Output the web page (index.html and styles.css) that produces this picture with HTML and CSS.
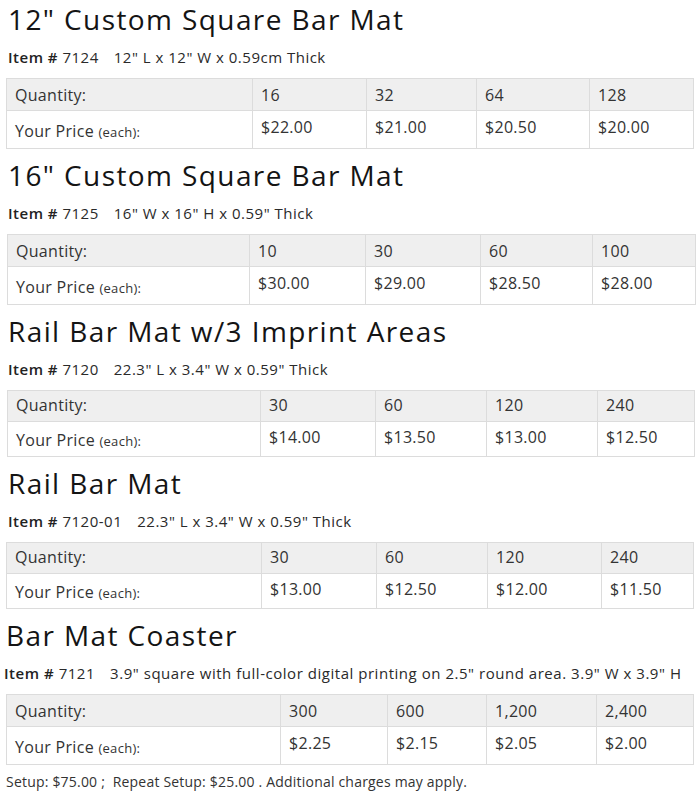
FILE: index.html
```html
<!DOCTYPE html>
<html lang="en">
<head>
<meta charset="utf-8">
<title>Bar Mat Pricing</title>
<link rel="stylesheet" href="styles.css">
</head>
<body>
<main class="page">
  <section class="product">
    <h2 class="product-title">12" Custom Square Bar Mat</h2>
    <p class="item-line"><span class="item-label">Item #</span> 7124<span class="item-desc">12" L x 12" W x 0.59cm Thick</span></p>
    <table class="price-table t1">
      <colgroup><col class="c1"><col class="c2"><col class="c3"><col class="c4"><col class="c5"></colgroup>
      <tr class="qty-row"><th class="label-cell">Quantity:</th><td>16</td><td>32</td><td>64</td><td>128</td></tr>
      <tr class="price-row"><th class="label-cell">Your Price <span class="each">(each):</span></th><td>$22.00</td><td>$21.00</td><td>$20.50</td><td>$20.00</td></tr>
    </table>
  </section>

  <section class="product">
    <h2 class="product-title">16" Custom Square Bar Mat</h2>
    <p class="item-line"><span class="item-label">Item #</span> 7125<span class="item-desc">16" W x 16" H x 0.59" Thick</span></p>
    <table class="price-table t2">
      <colgroup><col class="c1"><col class="c2"><col class="c3"><col class="c4"><col class="c5"></colgroup>
      <tr class="qty-row"><th class="label-cell">Quantity:</th><td>10</td><td>30</td><td>60</td><td>100</td></tr>
      <tr class="price-row"><th class="label-cell">Your Price <span class="each">(each):</span></th><td>$30.00</td><td>$29.00</td><td>$28.50</td><td>$28.00</td></tr>
    </table>
  </section>

  <section class="product">
    <h2 class="product-title">Rail Bar Mat w/3 Imprint Areas</h2>
    <p class="item-line"><span class="item-label">Item #</span> 7120<span class="item-desc">22.3" L x 3.4" W x 0.59" Thick</span></p>
    <table class="price-table price-table--compact t3">
      <colgroup><col class="c1"><col class="c2"><col class="c3"><col class="c4"><col class="c5"></colgroup>
      <tr class="qty-row"><th class="label-cell">Quantity:</th><td>30</td><td>60</td><td>120</td><td>240</td></tr>
      <tr class="price-row"><th class="label-cell">Your Price <span class="each">(each):</span></th><td>$14.00</td><td>$13.50</td><td>$13.00</td><td>$12.50</td></tr>
    </table>
  </section>

  <section class="product">
    <h2 class="product-title">Rail Bar Mat</h2>
    <p class="item-line"><span class="item-label">Item #</span> 7120-01<span class="item-desc">22.3" L x 3.4" W x 0.59" Thick</span></p>
    <table class="price-table price-table--compact t4">
      <colgroup><col class="c1"><col class="c2"><col class="c3"><col class="c4"><col class="c5"></colgroup>
      <tr class="qty-row"><th class="label-cell">Quantity:</th><td>30</td><td>60</td><td>120</td><td>240</td></tr>
      <tr class="price-row"><th class="label-cell">Your Price <span class="each">(each):</span></th><td>$13.00</td><td>$12.50</td><td>$12.00</td><td>$11.50</td></tr>
    </table>
  </section>

  <section class="product product--tight">
    <h2 class="product-title">Bar Mat Coaster</h2>
    <p class="item-line"><span class="item-label">Item #</span> 7121<span class="item-desc">3.9" square with full-color digital printing on 2.5" round area. 3.9" W x 3.9" H</span></p>
    <table class="price-table t5">
      <colgroup><col class="c1"><col class="c2"><col class="c3"><col class="c4"><col class="c5"></colgroup>
      <tr class="qty-row"><th class="label-cell">Quantity:</th><td>300</td><td>600</td><td>1,200</td><td>2,400</td></tr>
      <tr class="price-row"><th class="label-cell">Your Price <span class="each">(each):</span></th><td>$2.25</td><td>$2.15</td><td>$2.05</td><td>$2.00</td></tr>
    </table>
  </section>

  <p class="footnote">Setup: $75.00 ;&nbsp; Repeat Setup: $25.00 . Additional charges may apply.</p>
</main>
</body>
</html>
```

FILE: styles.css
```css
html, body {
  margin: 0;
  padding: 0;
  background: #ffffff;
}

body {
  font-family: "Open Sans", "Liberation Sans", sans-serif;
  color: #333333;
}

.page {
  display: flex;
  flex-direction: column;
  gap: 9px;
  padding: 2px 0 0 6px;
}

.product {
  display: flex;
  flex-direction: column;
  gap: 11px;
}

.product-title {
  margin: 0 0 0 2px;
  font-size: 28px;
  line-height: 34px;
  font-weight: 400;
  color: #141414;
  letter-spacing: 1.4px;
}

.item-line {
  margin: 0 0 0 2px;
  font-size: 15px;
  line-height: 20px;
  color: #2a2a2a;
  letter-spacing: 0.5px;
}

.product--tight .product-title {
  margin-left: 0;
}

.product--tight .item-line {
  margin-left: -2px;
  letter-spacing: 0.53px;
}

.item-label {
  font-weight: 600;
  color: #222222;
}

.item-desc {
  margin-left: 15px;
}

.price-table {
  border-collapse: collapse;
  table-layout: fixed;
  font-size: 16px;
  line-height: 20px;
  color: #333333;
  letter-spacing: 0.3px;
}

.price-table th,
.price-table td {
  border: 1px solid #dcdcdc;
  text-align: left;
  font-weight: 400;
  padding: 0 8px;
}

.qty-row th,
.qty-row td {
  background: #efefef;
  padding-top: 6px;
  padding-bottom: 5px;
}

.price-row th {
  padding-top: 10px;
  padding-bottom: 6px;
  vertical-align: top;
}

.price-row td {
  padding-top: 6px;
  padding-bottom: 10px;
  vertical-align: top;
}

.price-table--compact .qty-row th,
.price-table--compact .qty-row td {
  padding-top: 4px;
  padding-bottom: 6px;
}

.price-table--compact .price-row th {
  padding-top: 8px;
  padding-bottom: 5px;
}

.price-table--compact .price-row td {
  padding-top: 5px;
  padding-bottom: 8px;
}

.each {
  font-size: 13px;
}

.t1 { width: 688px; }
.t1 .c1 { width: 246px; }
.t1 .c2 { width: 114px; }
.t1 .c3 { width: 110px; }
.t1 .c4 { width: 113px; }
.t1 .c5 { width: 104px; }

.t2 { width: 689px; margin-left: 1px; }
.t2 .c1 { width: 242px; }
.t2 .c2 { width: 116px; }
.t2 .c3 { width: 115px; }
.t2 .c4 { width: 112px; }
.t2 .c5 { width: 103px; }

.t3 { width: 688px; margin-left: 1px; }
.t3 .c1 { width: 253px; }
.t3 .c2 { width: 115px; }
.t3 .c3 { width: 111px; }
.t3 .c4 { width: 111px; }
.t3 .c5 { width: 97px; }

.t4 { width: 688px; }
.t4 .c1 { width: 255px; }
.t4 .c2 { width: 115px; }
.t4 .c3 { width: 111px; }
.t4 .c4 { width: 114px; }
.t4 .c5 { width: 92px; }

.t5 { width: 688px; }
.t5 .c1 { width: 274px; }
.t5 .c2 { width: 107px; }
.t5 .c3 { width: 99px; }
.t5 .c4 { width: 110px; }
.t5 .c5 { width: 97px; }

.footnote {
  margin: -1px 0 0 0;
  font-size: 14px;
  line-height: 18px;
  color: #333333;
  letter-spacing: 0.2px;
}
```
